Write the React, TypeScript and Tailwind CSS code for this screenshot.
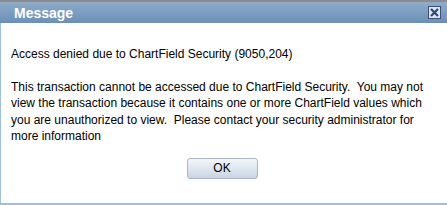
export default function App() {
  return (
    <div className="w-[447px] h-[205px] overflow-hidden bg-white flex flex-col" style={{ fontFamily: '"Liberation Sans", Arial, sans-serif' }}>
      <div className="h-[2px] bg-[#8c8c8c]" />
      <div className="h-[21px] flex items-center justify-between pl-[14px] pr-[6px] bg-gradient-to-b from-[#8eacca] to-[#6b8fb6]">
        <span className="text-white font-bold text-[14px] leading-none">Message</span>
        <div className="w-[13px] h-[13px] border border-[#3c4f7a] bg-[#dce6f2] flex items-center justify-center">
          <svg width="11" height="11" viewBox="0 0 11 11">
            <path d="M2 2 L9 9 M9 2 L2 9" stroke="#2f4577" strokeWidth="2.2" />
          </svg>
        </div>
      </div>
      <div className="flex-1 flex flex-col border-l border-[#9cc0e2] border-b-2 border-b-[#9cc0e2] text-[12px] text-black leading-[16.5px] pl-[10px] pr-[8px]">
        <p className="mt-[23px]">Access denied due to ChartField Security (9050,204)</p>
        <p className="mt-[16px]">
          This transaction cannot be accessed due to ChartField Security.&nbsp; You may not view the transaction because it contains one or more ChartField values which you are unauthorized to view.&nbsp; Please contact your security administrator for more information
        </p>
        <div className="flex justify-center mt-[13px] pr-[6px]">
          <button className="w-[71px] h-[21px] rounded-[3px] border border-[#a9b6c6] bg-gradient-to-b from-[#f3f6fa] via-[#dfe6ef] to-[#c9d5e3] text-[12px] text-black leading-none">
            OK
          </button>
        </div>
      </div>
    </div>
  );
}
